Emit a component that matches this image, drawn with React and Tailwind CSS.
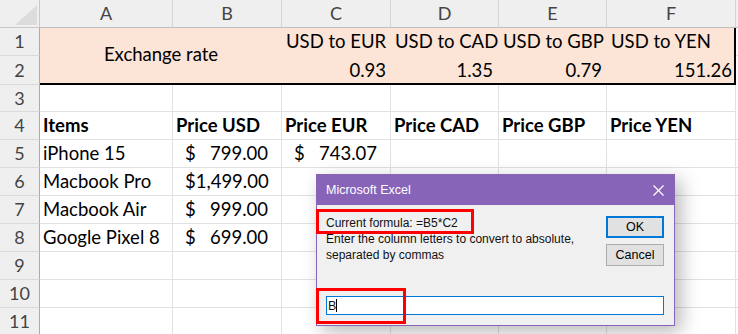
const cols = [
  { key: "A", w: "w-[133px]" },
  { key: "B", w: "w-[109px]" },
  { key: "C", w: "w-[109px]" },
  { key: "D", w: "w-[108px]" },
  { key: "E", w: "w-[108px]" },
  { key: "F", w: "w-[129px]" },
];

const rates = [
  { w: "w-[109px]", label: "USD to EUR", val: "0.93", pr: "pr-[5px]" },
  { w: "w-[108px]", label: "USD to CAD", val: "1.35", pr: "pr-[6px]" },
  { w: "w-[108px]", label: "USD to GBP", val: "0.79", pr: "pr-[5px]" },
  { w: "w-[127px]", label: "USD to YEN", val: "151.26", pr: "pr-[2px]" },
];

const items = [
  { n: 5, name: "iPhone 15", usd: "799.00", eur: "743.07" },
  { n: 6, name: "Macbook Pro", usd: "1,499.00" },
  { n: 7, name: "Macbook Air", usd: "999.00" },
  { n: 8, name: "Google Pixel 8", usd: "699.00" },
];

const cellFont = { fontFamily: "Lato, 'Liberation Sans', sans-serif" };

// Row number cell on the left
const RowNum = ({ n, h = "h-[28px]" }) => (
  <div className={`w-[40px] ${h} shrink-0 flex items-center justify-center bg-[#efefef] border-r border-r-[#ababab] border-b border-b-[#dadada] text-[18px] font-normal text-[#444]`}>
    {n}
  </div>
);

const Cell = ({ w, children, className = "" }) => (
  <div className={`${w} h-[28px] shrink-0 border-r border-b border-[#e1e1e1] px-[3px] flex items-center whitespace-nowrap ${className}`}>
    {children}
  </div>
);

const Money = ({ value }) => (
  <div className="flex w-full justify-between pl-[9px] pr-[10px]">
    <span>$</span>
    <span>{value}</span>
  </div>
);

const EmptyRow = ({ n }) => (
  <div className="flex">
    <RowNum n={n} />
    {cols.map((c) => (
      <Cell key={c.key} w={c.w} />
    ))}
    <Cell w="w-[20px]" />
  </div>
);

export default function App() {
  return (
    <div className="relative w-[738px] h-[334px] overflow-hidden bg-white text-black" style={cellFont}>
      {/* Column headers */}
      <div className="flex h-[28px]">
        <div className="w-[40px] shrink-0 bg-[#efefef] border-r border-b border-[#c8c8c8] relative">
          <svg className="absolute left-[15px] top-[5px]" width="22" height="20" viewBox="0 0 22 20">
            <polygon points="22,0 22,20 0,20" fill="#dcdcdc" />
          </svg>
        </div>
        {cols.map((c) => (
          <div key={c.key} className={`${c.w} shrink-0 bg-[#efefef] border-r border-r-[#d4d4d4] border-b border-b-[#c0c0c0] flex items-center justify-center text-[18px] text-[#444]`}>
            {c.key}
          </div>
        ))}
        <div className="w-[20px] shrink-0 bg-[#efefef] border-b border-[#c0c0c0]" />
      </div>

      {/* Rows 1-2: exchange rate block */}
      <div className="flex">
        <div className="flex flex-col">
          <RowNum n={1} />
          <RowNum n={2} h="h-[29px]" />
        </div>
        <div className="w-[696px] h-[57px] shrink-0 bg-[#fce4d6] border-b-2 border-r-2 border-black flex text-[18.5px]">
          <div className="w-[242px] shrink-0 flex items-center justify-center pb-[1px]">Exchange rate</div>
          {rates.map((r) => (
            <div key={r.label} className={`${r.w} shrink-0 flex flex-col`}>
              <div className="h-[28px] flex items-center pl-[4px] whitespace-nowrap">{r.label}</div>
              <div className={`h-[27px] flex items-center justify-end pt-[2px] ${r.pr}`}>{r.val}</div>
            </div>
          ))}
        </div>
        <div className="w-[20px] h-[57px] shrink-0 flex flex-col">
          <div className="h-[28px] border-b border-[#e1e1e1]" />
        </div>
      </div>

      <div className="flex">
        <RowNum n={3} h="h-[27px]" />
        {cols.map((c) => (
          <div key={c.key} className={`${c.w} h-[27px] shrink-0 border-r border-b border-[#e1e1e1]`} />
        ))}
      </div>

      {/* Row 4 headings */}
      <div className="flex text-[18.5px] font-bold">
        <RowNum n={4} />
        {["Items", "Price USD", "Price EUR", "Price CAD", "Price GBP", "Price YEN"].map((t, i) => (
          <Cell key={t} w={cols[i].w}>{t}</Cell>
        ))}
        <Cell w="w-[20px]" />
      </div>

      {items.map((it) => (
        <div key={it.n} className="flex text-[18.5px]">
          <RowNum n={it.n} />
          <Cell w={cols[0].w}>{it.name}</Cell>
          <Cell w={cols[1].w} className="px-0">
            <Money value={it.usd} />
          </Cell>
          <Cell w={cols[2].w} className="px-0">
            {it.eur ? <Money value={it.eur} /> : null}
          </Cell>
          <Cell w={cols[3].w} />
          <Cell w={cols[4].w} />
          <Cell w={cols[5].w} />
          <Cell w="w-[20px]" />
        </div>
      ))}

      <EmptyRow n={9} />
      <EmptyRow n={10} />
      <EmptyRow n={11} />

      {/* Dialog */}
      <div
        className="absolute left-[316px] top-[174px] w-[359px] h-[152px] bg-[#f0f0f0] border border-[#8764b8] shadow-[6px_6px_18px_rgba(0,0,0,0.28)] flex flex-col"
        style={{ fontFamily: "'Liberation Sans', Arial, sans-serif" }}
      >
        <div className="h-[30px] bg-[#8764b8] flex items-center justify-between pl-[9px] pr-[10px] text-white text-[12.5px]">
          <span>Microsoft Excel</span>
          <svg width="11" height="11" viewBox="0 0 11 11" stroke="white" strokeWidth="1.2">
            <line x1="0.5" y1="0.5" x2="10.5" y2="10.5" />
            <line x1="10.5" y1="0.5" x2="0.5" y2="10.5" />
          </svg>
        </div>
        <div className="flex-1 relative text-[12px] leading-[16px] text-[#111]">
          <div className="flex justify-between pl-[9px] pr-[10px] pt-[10px]">
            <div>
              <div className="h-[16px] flex items-center">Current formula: =B5*C2</div>
              <div>Enter the column letters to convert to absolute,</div>
              <div>separated by commas</div>
            </div>
            <div className="flex flex-col gap-[6px] pt-[1px]">
              <button className="w-[58px] h-[22px] bg-[#e1e1e1] border-2 border-[#0078d7] text-[12.5px] text-black">OK</button>
              <button className="w-[58px] h-[22px] bg-[#e1e1e1] border border-[#adadad] text-[12.5px] text-black">Cancel</button>
            </div>
          </div>
          <div className="absolute left-[9px] right-[10px] top-[91px] h-[19px] bg-white border border-[#0078d7] flex items-center pl-[1px] text-[12.5px]">
            B<span className="inline-block w-px h-[13px] bg-black" />
          </div>
          {/* Red highlight boxes */}
          <div className="absolute left-[-1px] top-[4px] w-[158px] h-[25px] border-[3px] border-[#ff0000]" />
          <div className="absolute left-[-1px] top-[83px] w-[90px] h-[36px] border-[3px] border-[#ff0000]" />
        </div>
      </div>
    </div>
  );
}
